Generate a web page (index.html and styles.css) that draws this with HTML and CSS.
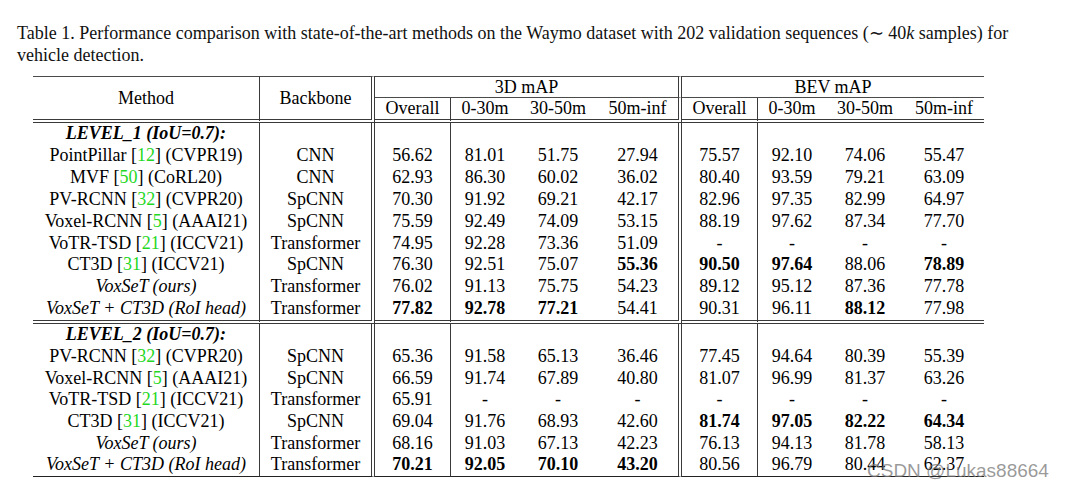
FILE: index.html
```html
<!DOCTYPE html>
<html lang="en">
<head>
<meta charset="utf-8">
<title>Table 1</title>
<link rel="stylesheet" href="styles.css">
</head>
<body>
<div class="page">
  <p class="caption">Table 1. Performance comparison with state-of-the-art methods on the Waymo dataset with 202 validation sequences (∼ 40<i>k</i> samples) for vehicle detection.</p>
  <table class="results">
    <colgroup>
      <col class="w-method"><col class="w-backbone">
      <col class="w-overall"><col class="w-near"><col class="w-mid"><col class="w-far3d">
      <col class="w-overall"><col class="w-near"><col class="w-mid"><col class="w-far">
    </colgroup>
    <thead>
      <tr class="head1">
        <th rowspan="2" class="sep span2">Method</th>
        <th rowspan="2" class="dsep span2">Backbone</th>
        <th colspan="4" class="group dsep">3D mAP</th>
        <th colspan="4" class="group">BEV mAP</th>
      </tr>
      <tr class="head2">
        <th class="sep">Overall</th><th>0-30m</th><th>30-50m</th><th class="dsep">50m-inf</th>
        <th class="sep">Overall</th><th>0-30m</th><th>30-50m</th><th>50m-inf</th>
      </tr>
    </thead>
    <tbody class="section first">
      <tr><td class="sep level">LEVEL_1 (IoU=0.7):</td><td class="dsep"></td><td class="sep"></td><td></td><td></td><td class="dsep"></td><td class="sep"></td><td></td><td></td><td></td></tr>
      <tr><td class="sep">PointPillar [<span class="cite">12</span>] (CVPR19)</td><td class="dsep">CNN</td><td class="sep">56.62</td><td>81.01</td><td>51.75</td><td class="dsep">27.94</td><td class="sep">75.57</td><td>92.10</td><td>74.06</td><td>55.47</td></tr>
      <tr><td class="sep">MVF [<span class="cite">50</span>] (CoRL20)</td><td class="dsep">CNN</td><td class="sep">62.93</td><td>86.30</td><td>60.02</td><td class="dsep">36.02</td><td class="sep">80.40</td><td>93.59</td><td>79.21</td><td>63.09</td></tr>
      <tr><td class="sep">PV-RCNN [<span class="cite">32</span>] (CVPR20)</td><td class="dsep">SpCNN</td><td class="sep">70.30</td><td>91.92</td><td>69.21</td><td class="dsep">42.17</td><td class="sep">82.96</td><td>97.35</td><td>82.99</td><td>64.97</td></tr>
      <tr><td class="sep">Voxel-RCNN [<span class="cite">5</span>] (AAAI21)</td><td class="dsep">SpCNN</td><td class="sep">75.59</td><td>92.49</td><td>74.09</td><td class="dsep">53.15</td><td class="sep">88.19</td><td>97.62</td><td>87.34</td><td>77.70</td></tr>
      <tr><td class="sep">VoTR-TSD [<span class="cite">21</span>] (ICCV21)</td><td class="dsep">Transformer</td><td class="sep">74.95</td><td>92.28</td><td>73.36</td><td class="dsep">51.09</td><td class="sep">-</td><td>-</td><td>-</td><td>-</td></tr>
      <tr><td class="sep">CT3D [<span class="cite">31</span>] (ICCV21)</td><td class="dsep">SpCNN</td><td class="sep">76.30</td><td>92.51</td><td>75.07</td><td class="dsep best">55.36</td><td class="sep best">90.50</td><td class="best">97.64</td><td>88.06</td><td class="best">78.89</td></tr>
      <tr><td class="sep ours">VoxSeT (ours)</td><td class="dsep">Transformer</td><td class="sep">76.02</td><td>91.13</td><td>75.75</td><td class="dsep">54.23</td><td class="sep">89.12</td><td>95.12</td><td>87.36</td><td>77.78</td></tr>
      <tr class="last"><td class="sep ours">VoxSeT + CT3D (RoI head)</td><td class="dsep">Transformer</td><td class="sep best">77.82</td><td class="best">92.78</td><td class="best">77.21</td><td class="dsep">54.41</td><td class="sep">90.31</td><td>96.11</td><td class="best">88.12</td><td>77.98</td></tr>
    </tbody>
    <tbody class="section second">
      <tr><td class="sep level">LEVEL_2 (IoU=0.7):</td><td class="dsep"></td><td class="sep"></td><td></td><td></td><td class="dsep"></td><td class="sep"></td><td></td><td></td><td></td></tr>
      <tr><td class="sep">PV-RCNN [<span class="cite">32</span>] (CVPR20)</td><td class="dsep">SpCNN</td><td class="sep">65.36</td><td>91.58</td><td>65.13</td><td class="dsep">36.46</td><td class="sep">77.45</td><td>94.64</td><td>80.39</td><td>55.39</td></tr>
      <tr><td class="sep">Voxel-RCNN [<span class="cite">5</span>] (AAAI21)</td><td class="dsep">SpCNN</td><td class="sep">66.59</td><td>91.74</td><td>67.89</td><td class="dsep">40.80</td><td class="sep">81.07</td><td>96.99</td><td>81.37</td><td>63.26</td></tr>
      <tr><td class="sep">VoTR-TSD [<span class="cite">21</span>] (ICCV21)</td><td class="dsep">Transformer</td><td class="sep">65.91</td><td>-</td><td>-</td><td class="dsep">-</td><td class="sep">-</td><td>-</td><td>-</td><td>-</td></tr>
      <tr><td class="sep">CT3D [<span class="cite">31</span>] (ICCV21)</td><td class="dsep">SpCNN</td><td class="sep">69.04</td><td>91.76</td><td>68.93</td><td class="dsep">42.60</td><td class="sep best">81.74</td><td class="best">97.05</td><td class="best">82.22</td><td class="best">64.34</td></tr>
      <tr><td class="sep ours">VoxSeT (ours)</td><td class="dsep">Transformer</td><td class="sep">68.16</td><td>91.03</td><td>67.13</td><td class="dsep">42.23</td><td class="sep">76.13</td><td>94.13</td><td>81.78</td><td>58.13</td></tr>
      <tr class="last"><td class="sep ours">VoxSeT + CT3D (RoI head)</td><td class="dsep">Transformer</td><td class="sep best">70.21</td><td class="best">92.05</td><td class="best">70.10</td><td class="dsep best">43.20</td><td class="sep">80.56</td><td>96.79</td><td>80.44</td><td>62.37</td></tr>
    </tbody>
  </table>
  <div class="watermark">CSDN @Lukas88664</div>
</div>
</body>
</html>
```

FILE: styles.css
```css
html, body {
  margin: 0;
  padding: 0;
  background: #ffffff;
}

body {
  font-family: "Liberation Serif", "Times New Roman", serif;
  color: #000000;
}

.page {
  position: relative;
  width: 1066px;
  height: 489px;
  overflow: hidden;
}

.caption {
  margin: 22px 0 0 17px;
  width: 1000px;
  font-size: 18px;
  line-height: 22px;
  color: #111111;
}

.results {
  margin: 10px 0 0 33px;
  width: 951px;
  table-layout: fixed;
  border-collapse: separate;
  border-spacing: 0;
  font-size: 18px;
}

.w-method { width: 227px; }
.w-backbone { width: 115px; }
.w-overall { width: 76px; }
.w-near { width: 68px; }
.w-mid { width: 78px; }
.w-far3d { width: 85px; }
.w-far { width: 80px; }

.results th,
.results td {
  padding: 0;
  text-align: center;
  vertical-align: middle;
  font-weight: normal;
  white-space: nowrap;
  line-height: 21.9px;
}

.results .sep { border-right: 1px solid #3a3a3a; }
.results .dsep { border-right: 4px double #3a3a3a; }

.results .head1 th {
  border-top: 1px solid #4a4a4a;
  line-height: 20px;
}

.results .head1 .group { border-bottom: 1px solid #4a4a4a; }

.results .head1 .span2,
.results .head2 th {
  border-bottom: 4px double #3a3a3a;
}

.results .head2 th { line-height: 21px; }

.results .first .last td { border-bottom: 4px double #3a3a3a; }
.results .second .last td { border-bottom: 1px solid #222222; }
.results .second td { line-height: 21.7px; }

.results .level {
  font-weight: bold;
  font-style: italic;
}

.results .ours { font-style: italic; }

.results .best { font-weight: bold; }

.cite { color: #1fd81f; }

.watermark {
  position: absolute;
  left: 867px;
  top: 461px;
  font-family: "Liberation Sans", Arial, sans-serif;
  font-size: 19px;
  line-height: 20px;
  color: rgba(120, 120, 120, 0.75);
  white-space: nowrap;
}
```
